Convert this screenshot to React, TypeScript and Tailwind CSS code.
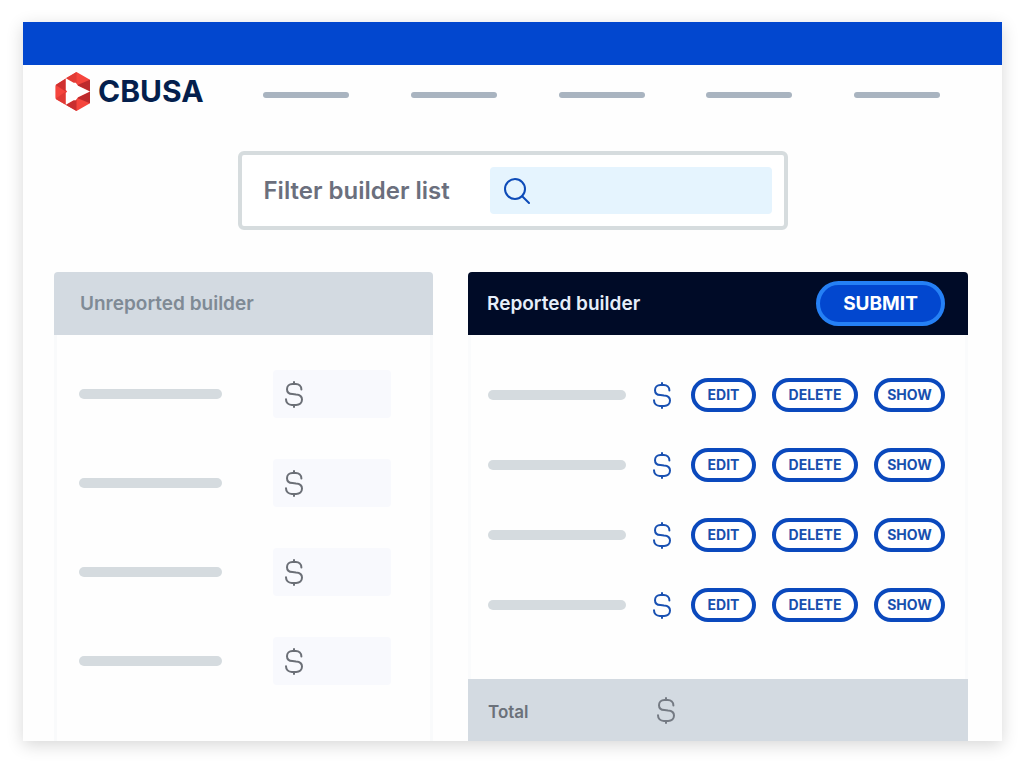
import React from "react";

const rows = [1, 2, 3, 4];

function Logo() {
  return (
    <svg viewBox="0 0 35 39" className="h-[39px] w-[35px] shrink-0" aria-hidden="true">
      <path d="M21.5 0 L35 7.8 V31.2 L21.5 39 L1.4 27.4 Q0.4 26.8 0.4 25.6 V14.2 Q0.4 13 1.4 12.4 Z" fill="#f5453d" />
      <path d="M10.7 6.3 L21.5 12.2 L21.5 0 Z" fill="#e23c36" />
      <path d="M35 7.8 V19.5 L21.8 13.2 Z" fill="#bd2a2d" />
      <path d="M0.6 12.9 L10.7 6.4 V19.5 Z" fill="#cf3130" />
      <path d="M0.6 26.8 L10.7 19.5 V32.8 Z" fill="#e03a35" />
      <path d="M10.7 32.8 L21.5 26.5 L21.5 39 Z" fill="#c92e2f" />
      <path d="M35 31.2 V19.5 L22 26 Z" fill="#bd2a2d" />
      <path
        d="M10.8 6.3 L18.6 10.8 L20.8 10.8 L23 13.8 L35 19.5 L23 25.2 L20.8 28.2 L18.6 28.2 L10.8 32.8 V21 L12.2 19.5 L10.8 18 Z"
        fill="#fff"
      />
    </svg>
  );
}

function Dollar({ className }: { className: string }) {
  return (
    <svg
      viewBox="0 0 18 27"
      className={`h-[27px] w-[18px] shrink-0 ${className}`}
      fill="none"
      stroke="currentColor"
      strokeWidth="2"
      strokeLinecap="round"
      aria-hidden="true"
    >
      <path d="M16.4 8.6 C16.4 5.2 14 3.1 10.8 3.1 H7.4 C4.2 3.1 2 5.2 2 8.2 C2 11.2 4.2 12.9 7.4 13.1 L11 13.4 C14.6 13.6 17 15.3 17 18.5 C17 21.7 14.6 23.9 11.2 23.9 H6.8 C3.4 23.9 1 21.8 1 18.2" />
      <path d="M9 1 V3 M9 24 V26" />
    </svg>
  );
}

function Search() {
  return (
    <svg
      viewBox="0 0 26 26"
      className="size-[26px] shrink-0 text-[#0d4bb8]"
      fill="none"
      stroke="currentColor"
      strokeWidth="2"
      strokeLinecap="round"
      aria-hidden="true"
    >
      <circle cx="11" cy="11" r="10" />
      <path d="M18.2 18.2 L25 25" />
    </svg>
  );
}

function RowButton({ children, className }: { children: string; className: string }) {
  return (
    <button
      type="button"
      className={`h-[34px] shrink-0 rounded-full border-4 border-[#0b49bd] bg-white text-center text-[14px] leading-none font-bold text-[#174fae] ${className}`}
    >
      {children}
    </button>
  );
}

export default function App() {
  return (
    <div className="bg-white pt-[22px] pr-[22px] pb-[23px] pl-[23px] font-['Inter',sans-serif]">
      <div className="bg-[#fefefe] shadow-[0_4px_16px_rgba(0,0,0,0.16)]">
        <div className="h-[43px] bg-[#0247cf]" />

        <header className="flex h-[52px] items-center pr-[62px] pl-8">
          <a
            href="#"
            className="flex w-[148px] shrink-0 items-center gap-2 text-[30px] leading-none font-bold text-[#041f4d]"
          >
            <Logo />
            CBUSA
          </a>
          <nav className="ml-[60px] flex flex-1 justify-between pt-2" aria-label="Main">
            {[1, 2, 3, 4, 5].map((n) => (
              <a key={n} href="#" aria-label={`Section ${n}`} className="h-[6px] w-[86px] rounded-full bg-[#a9b4c0]" />
            ))}
          </nav>
        </header>

        <main>
          <form className="mx-auto mt-[34px] flex h-[79px] w-[550px] items-center justify-between rounded-md border-4 border-[#d6dcde] bg-white pr-3 pl-[22px]">
            <label htmlFor="filter" className="text-2xl font-semibold text-[#6b6f7d]">
              Filter builder list
            </label>
            <div className="flex h-[47px] w-[282px] items-center gap-3 rounded-sm bg-[#e5f4fe] px-[14px]">
              <Search />
              <input id="filter" type="text" className="w-full min-w-0 bg-transparent text-lg outline-none" />
            </div>
          </form>

          <div className="mt-[42px] flex gap-[35px] pr-[34px] pl-[31px]">
            <section className="flex flex-[379] flex-col">
              <h2 className="flex h-[63px] items-center rounded-t-[4px] bg-[#d3dae1] px-[26px] text-[19px] leading-7 font-semibold text-[#7f8a95]">
                Unreported builder
              </h2>
              <ul className="flex flex-1 flex-col gap-[41px] border-x-[3px] border-[#f9fafb] pt-[35px] pr-[39px] pl-[22px]">
                {rows.map((n) => (
                  <li key={n} className="flex items-center justify-between">
                    <div className="h-[10px] w-[143px] rounded-full bg-[#d5dbdf]" />
                    <label className="flex h-12 w-[118px] items-center gap-2 rounded-sm bg-[#f8f9fd] px-3 text-[#6b6f76]">
                      <Dollar className="text-[#6b6f76]" />
                      <input
                        type="text"
                        aria-label={`Amount for unreported builder ${n}`}
                        className="w-full min-w-0 bg-transparent outline-none"
                      />
                    </label>
                  </li>
                ))}
              </ul>
            </section>

            <section className="flex-[500]">
              <div className="flex h-[63px] items-center justify-between rounded-t-[4px] bg-[#000b27] pr-[23px] pl-[19px]">
                <h2 className="text-[19px] leading-7 font-semibold text-[#e6effa]">Reported builder</h2>
                <button
                  type="button"
                  className="h-[45px] w-[129px] rounded-full border-4 border-[#2580f5] bg-[#0247cf] text-[19px] leading-none font-bold text-white"
                >
                  SUBMIT
                </button>
              </div>
              <ul className="flex flex-col gap-9 border-x-[3px] border-[#fafbfc] pt-[43px] pr-5 pb-[57px] pl-[17px]">
                {rows.map((n) => (
                  <li key={n} className="flex items-center justify-between">
                    <div className="h-[10px] w-[138px] rounded-full bg-[#d5dbdf]" />
                    <div className="flex items-center gap-4">
                      <Dollar className="mr-1 text-[#1850b2]" />
                      <RowButton className="w-[65px]">EDIT</RowButton>
                      <RowButton className="w-[86px]">DELETE</RowButton>
                      <RowButton className="w-[71px]">SHOW</RowButton>
                    </div>
                  </li>
                ))}
              </ul>
              <div className="flex h-[62px] items-center bg-[#d3dae1] pl-5 text-[#6b717a]">
                <span className="w-[169px] pt-1 text-[17px] leading-6 font-semibold">Total</span>
                <Dollar className="text-[#747a83]" />
              </div>
            </section>
          </div>
        </main>
      </div>
    </div>
  );
}
